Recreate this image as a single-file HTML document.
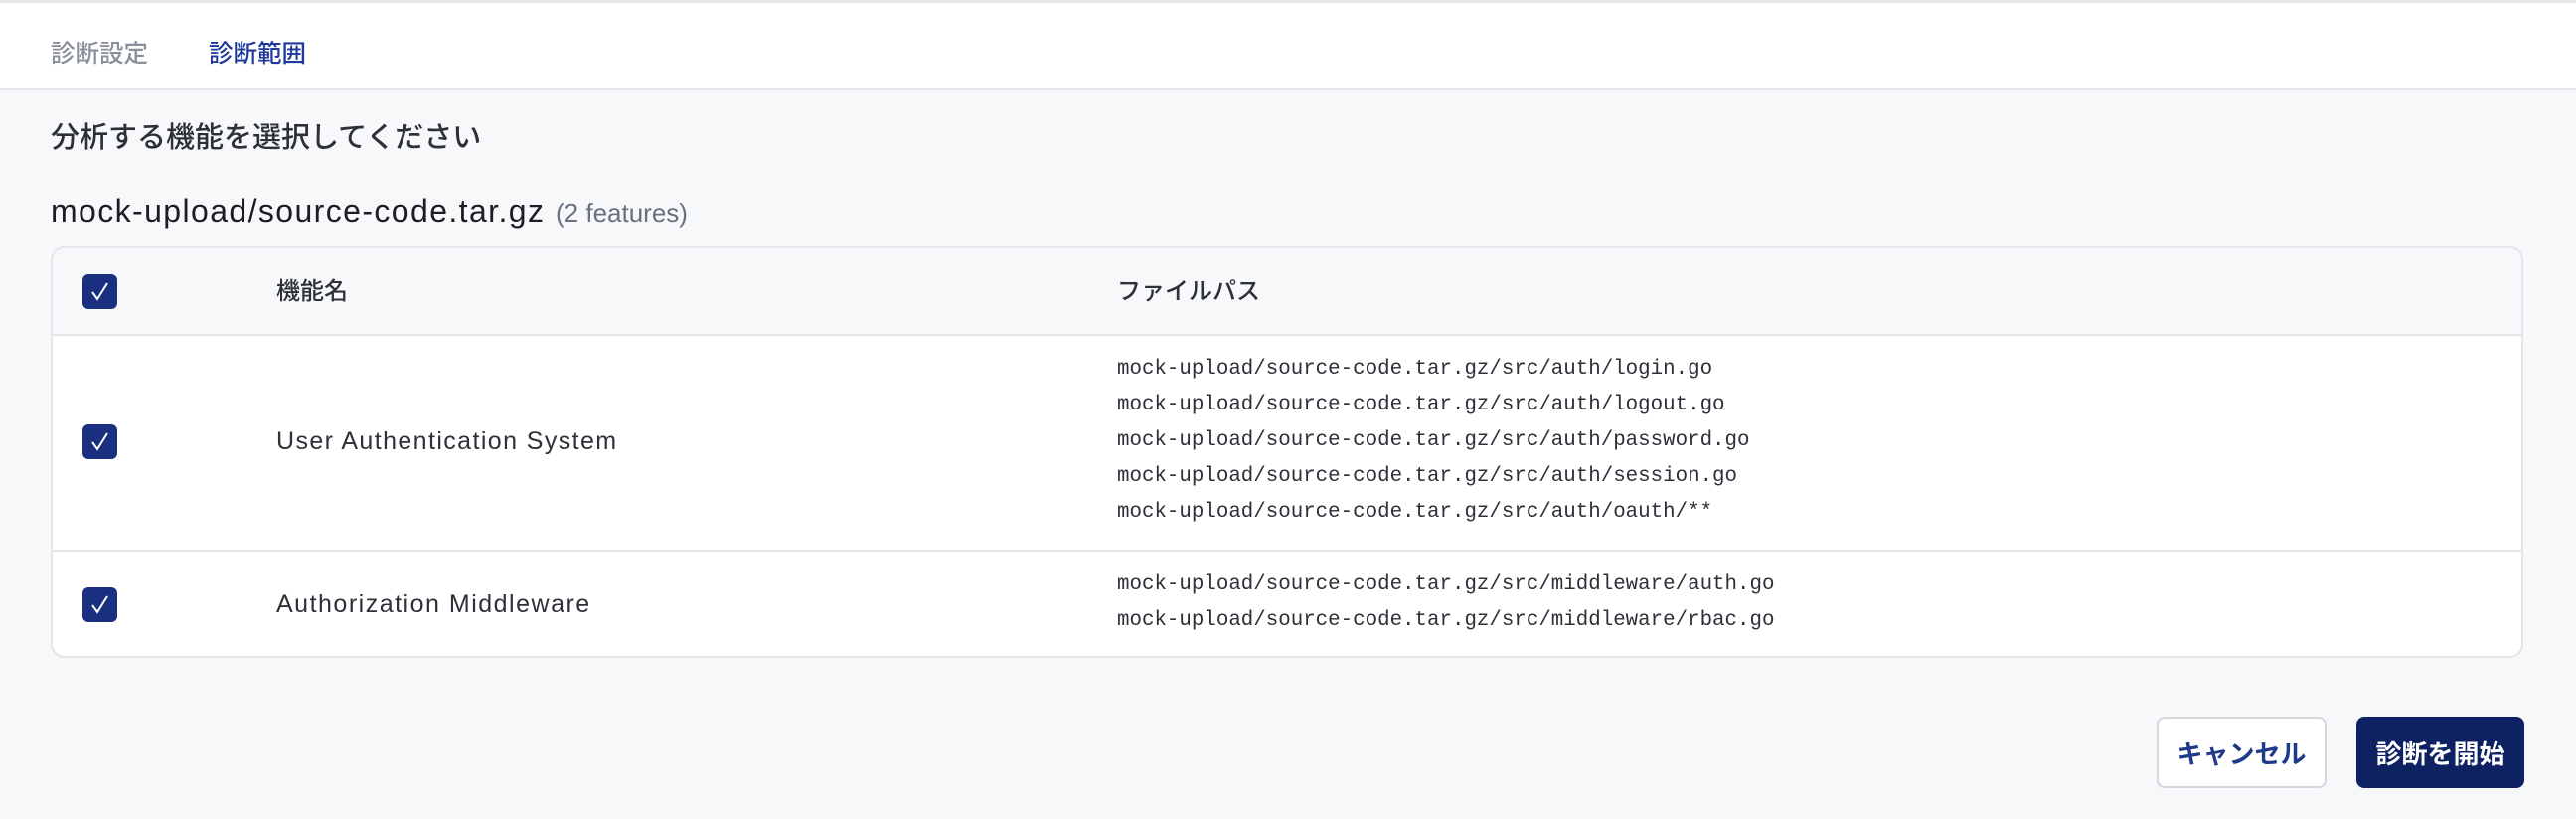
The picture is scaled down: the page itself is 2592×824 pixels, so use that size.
<!DOCTYPE html>
<html><head><meta charset="utf-8"><style>
*{box-sizing:border-box;margin:0;padding:0}
body{width:2592px;height:824px;background:#f7f8fa;font-family:"Liberation Sans","Noto Sans CJK JP",sans-serif;position:relative;overflow:hidden;color:#2d3038}
.hdr{position:absolute;left:0;top:0;width:2592px;height:91px;background:#fff;border-top:3px solid #e6e7eb;border-bottom:2px solid #e3e5ea}
.tab{position:absolute;top:36px;font-size:24.5px;font-weight:500;line-height:32px}
.abs{position:absolute;white-space:nowrap}
.card{position:absolute;left:51px;top:248px;width:2488px;height:414px;background:#fff;border:2px solid #e3e5ea;border-radius:14px;overflow:hidden}
.th{position:absolute;left:0;top:0;width:100%;height:88px;background:#f7f8fa;border-bottom:2px solid #e3e5ea}
.cb{position:absolute;width:35px;height:35px;background:#1a2f80;border-radius:6px}
.cb svg{position:absolute;left:0;top:0}
.mono{font-family:"Liberation Mono","DejaVu Sans Mono",monospace;font-size:20.8px;color:#2d3038;line-height:36px}
.btn{position:absolute;top:721px;height:72px;border-radius:8px;font-size:26px;font-weight:700;display:flex;align-items:center;justify-content:center}
</style></head><body>
<div class="hdr">
<div class="tab" style="left:51px;color:#8a8f9c">診断設定</div>
<div class="tab" style="left:210px;color:#1f3a9a">診断範囲</div>
</div>
<div class="abs" style="left:51px;top:120px;font-size:29px;font-weight:500;line-height:38px">分析する機能を選択してください</div>
<div class="abs" style="left:51px;top:192px;font-size:32px;letter-spacing:1.4px;font-weight:500;line-height:40px;color:#1b1d22">mock-upload/source-code.tar.gz</div>
<div class="abs" style="left:559px;top:196px;font-size:26px;line-height:36px;color:#6b7080">(2 features)</div>
<div class="card">
<div class="th"></div>
<div class="cb" style="left:30px;top:26px"><svg width="35" height="35"><path d="M10 18 L15 25 L25 9" stroke="#fff" stroke-width="2" fill="none"/></svg></div>
<div class="abs" style="left:225px;top:28px;font-size:24px;font-weight:500;line-height:32px">機能名</div>
<div class="abs" style="left:1071px;top:28px;font-size:24px;font-weight:500;line-height:32px">ファイルパス</div>
<div class="cb" style="left:30px;top:177px"><svg width="35" height="35"><path d="M10 18 L15 25 L25 9" stroke="#fff" stroke-width="2" fill="none"/></svg></div>
<div class="abs" style="left:225px;top:178px;font-size:25px;letter-spacing:1.4px;line-height:32px">User Authentication System</div>
<div class="abs mono" style="left:1071px;top:104px">mock-upload/source-code.tar.gz/src/auth/login.go<br>mock-upload/source-code.tar.gz/src/auth/logout.go<br>mock-upload/source-code.tar.gz/src/auth/password.go<br>mock-upload/source-code.tar.gz/src/auth/session.go<br>mock-upload/source-code.tar.gz/src/auth/oauth/**</div>
<div style="position:absolute;left:0;top:303px;width:100%;height:2px;background:#e3e5ea"></div>
<div class="cb" style="left:30px;top:341px"><svg width="35" height="35"><path d="M10 18 L15 25 L25 9" stroke="#fff" stroke-width="2" fill="none"/></svg></div>
<div class="abs" style="left:225px;top:342px;font-size:25px;letter-spacing:1.5px;line-height:32px">Authorization Middleware</div>
<div class="abs mono" style="left:1071px;top:321px">mock-upload/source-code.tar.gz/src/middleware/auth.go<br>mock-upload/source-code.tar.gz/src/middleware/rbac.go</div>
</div>
<div class="btn" style="left:2170px;width:171px;background:#fff;border:2px solid #d4d6dd;color:#1f3a8a">キャンセル</div>
<div class="btn" style="left:2371px;width:169px;background:#0e2163;color:#fff">診断を開始</div>
</body></html>
